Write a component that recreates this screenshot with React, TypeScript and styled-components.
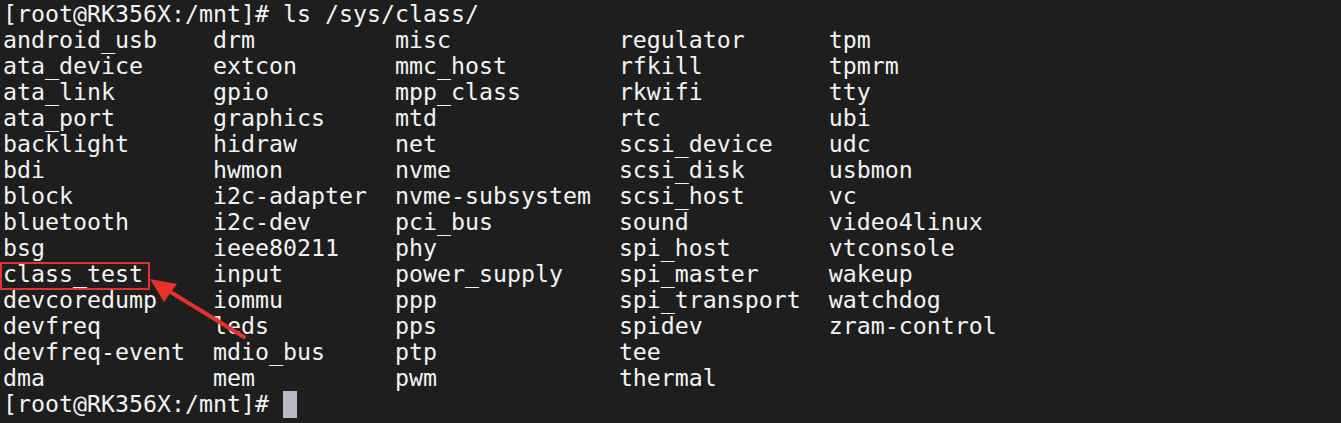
import React from "react";
import styled, { createGlobalStyle } from "styled-components";

const GlobalStyle = createGlobalStyle`
  html, body {
    margin: 0;
    padding: 0;
    background: #1e1e1e;
  }
  body {
    width: 1341px;
    height: 423px;
    overflow: hidden;
  }
`;

const Terminal = styled.div`
  position: relative;
  width: 1341px;
  height: 423px;
  box-sizing: border-box;
  padding: 1px 0 0 3px;
  background: #1e1e1e;
  color: #f3f3f3;
  font-family: "DejaVu Sans Mono", monospace;
  font-size: 23.25px;
  line-height: 26px;
  white-space: pre;
`;

const Line = styled.div`
  display: flex;
  align-items: center;
  height: 26px;
`;

const Listing = styled.div`
  display: grid;
  grid-template-columns: 15ch 13ch 16ch 15ch auto;
  grid-template-rows: repeat(14, 26px);
  grid-auto-flow: column;
`;

const Entry = styled.span<{ $marked?: boolean }>`
  position: relative;
  display: block;
  &::after {
    content: "";
    display: ${(p) => (p.$marked ? "block" : "none")};
    position: absolute;
    left: -3px;
    top: 1px;
    width: 146px;
    height: 24px;
    border: 2px solid #e5322d;
    box-sizing: content-box;
  }
`;

const Cursor = styled.span`
  display: inline-block;
  width: 14px;
  height: 27px;
  margin-left: 14px;
  background: #b9b8c6;
`;

const ArrowLayer = styled.svg`
  position: absolute;
  left: 0;
  top: 0;
  pointer-events: none;
`;

const columns = [
  ["android_usb", "ata_device", "ata_link", "ata_port", "backlight", "bdi", "block", "bluetooth", "bsg", "class_test", "devcoredump", "devfreq", "devfreq-event", "dma"],
  ["drm", "extcon", "gpio", "graphics", "hidraw", "hwmon", "i2c-adapter", "i2c-dev", "ieee80211", "input", "iommu", "leds", "mdio_bus", "mem"],
  ["misc", "mmc_host", "mpp_class", "mtd", "net", "nvme", "nvme-subsystem", "pci_bus", "phy", "power_supply", "ppp", "pps", "ptp", "pwm"],
  ["regulator", "rfkill", "rkwifi", "rtc", "scsi_device", "scsi_disk", "scsi_host", "sound", "spi_host", "spi_master", "spi_transport", "spidev", "tee", "thermal"],
  ["tpm", "tpmrm", "tty", "ubi", "udc", "usbmon", "vc", "video4linux", "vtconsole", "wakeup", "watchdog", "zram-control"],
];

export default function App() {
  return (
    <>
      <GlobalStyle />
      <Terminal>
        <Line>[root@RK356X:/mnt]# ls /sys/class/</Line>
        <Listing>
          {columns.map((col, ci) =>
            col.map((name, ri) => (
              <Entry
                key={name}
                $marked={name === "class_test"}
                style={{ gridColumn: ci + 1, gridRow: ri + 1 }}
              >
                {name}
              </Entry>
            ))
          )}
        </Listing>
        <Line>
          [root@RK356X:/mnt]#
          <Cursor />
        </Line>
        <ArrowLayer width="1341" height="423" viewBox="0 0 1341 423">
          <line x1="244" y1="337" x2="164" y2="288" stroke="#e5322d" strokeWidth="4" strokeLinecap="round" />
          <polygon points="150,279 177,284 164,302" fill="#e5322d" />
        </ArrowLayer>
      </Terminal>
    </>
  );
}
